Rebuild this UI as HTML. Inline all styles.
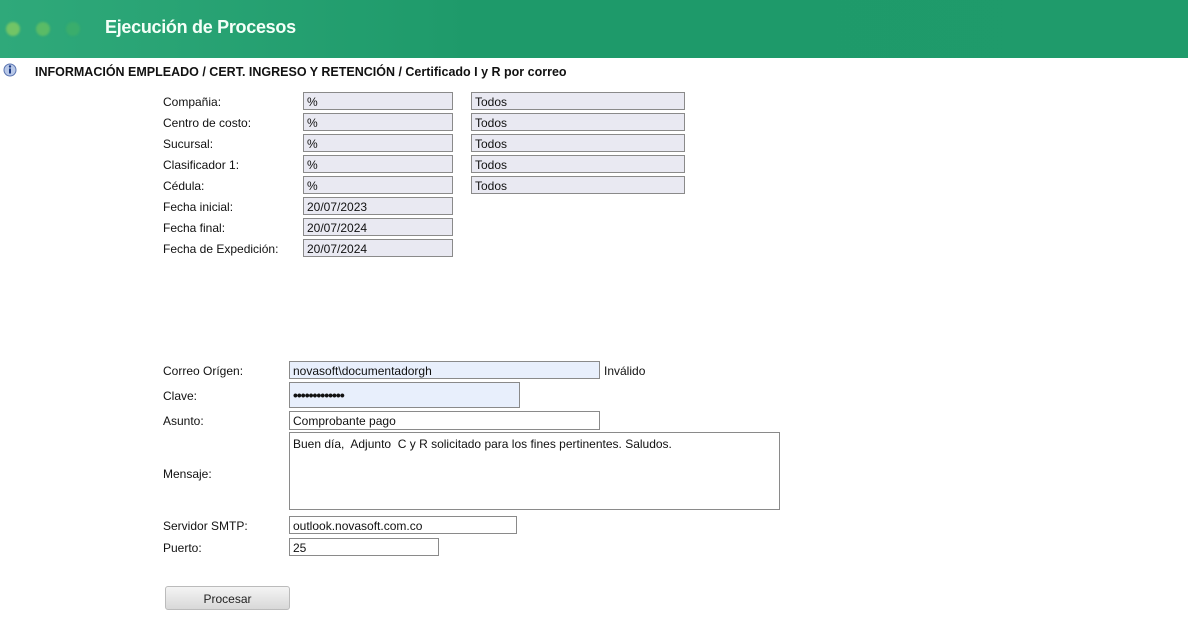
<!DOCTYPE html>
<html><head><meta charset="utf-8"><style>
body{margin:0;width:1188px;height:636px;background:#fff;font-family:"Liberation Sans","DejaVu Sans",sans-serif;font-size:12px;color:#111;position:relative;overflow:hidden}
.hdr{position:absolute;left:0;top:0;width:1188px;height:58px;background:linear-gradient(90deg,#2fa97a,#1e9a6a 40%,#1f9b6b)}
.dot{position:absolute;top:22px;width:14px;height:14px;border-radius:50%;filter:blur(1px)}
.ttl{position:absolute;left:105px;top:17px;color:#f4fff8;font-weight:bold;font-size:18px;letter-spacing:-0.3px}
.a{position:absolute;white-space:nowrap}
.in{position:absolute;box-sizing:border-box;border:1px solid #8a8a8a;background:#e9e9f2;height:18px;padding:2px 3px 0;font-size:12px;line-height:14px;white-space:nowrap}
.w{background:#fff}
.b{background:#e8effc}
</style></head><body>
<div class="hdr">
<div class="dot" style="left:6px;background:#72c466"></div>
<div class="dot" style="left:36px;background:#5abb66"></div>
<div class="dot" style="left:66px;background:#3aad6c"></div>
<div class="ttl">Ejecución de Procesos</div>
</div>
<svg class="a" style="left:3px;top:63px" width="14" height="14" viewBox="0 0 14 14"><circle cx="7" cy="7" r="6" fill="#b8c8e8" stroke="#5a74b0"/><rect x="6" y="5.5" width="2" height="5" fill="#1d3b86"/><circle cx="7" cy="3.5" r="1.2" fill="#1d3b86"/></svg>
<div class="a" style="left:35px;top:65px;font-weight:bold;font-size:12.5px">INFORMACIÓN EMPLEADO / CERT. INGRESO Y RETENCIÓN / Certificado I y R por correo</div>

<div class="a" style="left:163px;top:95px">Compañia:</div>
<div class="a" style="left:163px;top:116px">Centro de costo:</div>
<div class="a" style="left:163px;top:137px">Sucursal:</div>
<div class="a" style="left:163px;top:158px">Clasificador 1:</div>
<div class="a" style="left:163px;top:179px">Cédula:</div>
<div class="a" style="left:163px;top:200px">Fecha inicial:</div>
<div class="a" style="left:163px;top:221px">Fecha final:</div>
<div class="a" style="left:163px;top:242px">Fecha de Expedición:</div>

<div class="in" style="left:303px;top:92px;width:150px">%</div>
<div class="in" style="left:303px;top:113px;width:150px">%</div>
<div class="in" style="left:303px;top:134px;width:150px">%</div>
<div class="in" style="left:303px;top:155px;width:150px">%</div>
<div class="in" style="left:303px;top:176px;width:150px">%</div>
<div class="in" style="left:303px;top:197px;width:150px">20/07/2023</div>
<div class="in" style="left:303px;top:218px;width:150px">20/07/2024</div>
<div class="in" style="left:303px;top:239px;width:150px">20/07/2024</div>
<div class="in" style="left:471px;top:92px;width:214px">Todos</div>
<div class="in" style="left:471px;top:113px;width:214px">Todos</div>
<div class="in" style="left:471px;top:134px;width:214px">Todos</div>
<div class="in" style="left:471px;top:155px;width:214px">Todos</div>
<div class="in" style="left:471px;top:176px;width:214px">Todos</div>

<div class="a" style="left:163px;top:364px">Correo Orígen:</div>
<div class="in b" style="left:289px;top:361px;width:311px">novasoft\documentadorgh</div>
<div class="a" style="left:604px;top:364px">Inválido</div>
<div class="a" style="left:163px;top:389px">Clave:</div>
<div class="in b" style="left:289px;top:382px;width:231px;height:26px;padding-top:5px;font-size:14px;font-weight:bold;letter-spacing:-1px">•••••••••••••</div>
<div class="a" style="left:163px;top:414px">Asunto:</div>
<div class="in w" style="left:289px;top:411px;width:311px;height:19px">Comprobante pago</div>
<div class="a" style="left:163px;top:467px">Mensaje:</div>
<div class="in w" style="left:289px;top:432px;width:491px;height:78px;padding:4px 3px">Buen día,&nbsp; Adjunto&nbsp; C y R solicitado para los fines pertinentes. Saludos.</div>
<div class="a" style="left:163px;top:519px">Servidor SMTP:</div>
<div class="in w" style="left:289px;top:516px;width:228px">outlook.novasoft.com.co</div>
<div class="a" style="left:163px;top:541px">Puerto:</div>
<div class="in w" style="left:289px;top:538px;width:150px">25</div>

<div class="a" style="left:165px;top:586px;width:123px;height:22px;border:1px solid #bbb;border-radius:3px;background:linear-gradient(#f4f4f4,#d8d8d8);text-align:center;line-height:24px;color:#222">Procesar</div>
</body></html>
